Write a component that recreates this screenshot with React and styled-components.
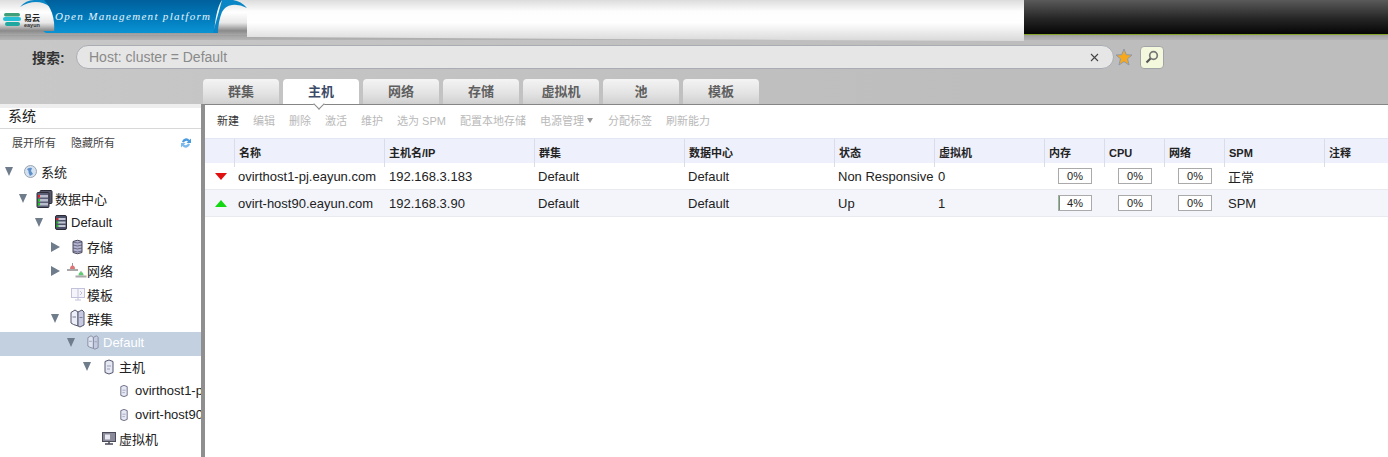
import React from "react";
import styled, { createGlobalStyle } from "styled-components";

const cjk = `"Liberation Sans", "Noto Sans CJK SC", sans-serif`;

const GlobalStyle = createGlobalStyle`
  html, body { margin: 0; padding: 0; background: #fff; }
  body { font-family: ${cjk}; overflow: hidden; }
`;

const Page = styled.div`
  width: 1388px;
  height: 457px;
  overflow: hidden;
  display: flex;
  flex-direction: column;
  background: #bdbdbd;
`;

const Header = styled.div`
  display: flex;
  align-items: flex-start;
  height: 40px;
  flex: none;
  background: linear-gradient(#8c8c8c 34px, #a5a5a5 36px, #b4b4b4 40px);
`;

const LogoBox = styled.svg`
  width: 247px;
  height: 35px;
  flex: none;
  display: block;
`;

const WhiteBand = styled.div`
  width: 777px;
  height: 41px;
  flex: none;
  background: linear-gradient(#dcdcdc, #fdfdfd 28%, #fff 55%, #d9d9d9);
  position: relative;
  z-index: 1;
  clip-path: polygon(0 0, 100% 0, 100% 41px, 70% 40px, 45% 39px, 0 37px);
`;

const DarkBand = styled.div`
  flex: 1;
  height: 34px;
  background: linear-gradient(#5a5a5a, #262626 55%, #050505);
  border-bottom: 1px solid #86a52c;
`;

const SearchArea = styled.div`
  height: 64px;
  flex: none;
  display: flex;
  flex-direction: column;
  background: linear-gradient(90deg, #c8c8c8, #c4c4c4 300px, #bdbdbd 1000px);
`;

const SearchRow = styled.div`
  display: flex;
  align-items: center;
  height: 24px;
  margin-top: 5px;
  padding-left: 32px;
`;

const SearchLabel = styled.div`
  width: 44px;
  font-size: 14px;
  font-weight: 700;
  color: #333;
`;

const SearchBox = styled.div`
  width: 1038px;
  height: 24px;
  box-sizing: border-box;
  display: flex;
  align-items: center;
  justify-content: space-between;
  padding: 0 12px;
  background: #e6e6e6;
  border: 1px solid #a9adb3;
  border-radius: 12px;
  font-size: 14px;
  color: #8a8a8a;
`;

const Clear = styled.svg`
  width: 9px;
  height: 9px;
  margin-right: 2px;
`;

const Star = styled.svg`
  width: 18px;
  height: 18px;
  margin-left: 1px;
`;

const SearchBtn = styled.div`
  width: 24px;
  height: 23px;
  box-sizing: border-box;
  margin-left: 7px;
  display: flex;
  align-items: center;
  justify-content: center;
  background: #f4f9dd;
  border: 1px solid #a2a5a8;
  border-radius: 4px;
`;

const Tabs = styled.div`
  display: flex;
  gap: 4px;
  margin-top: 10px;
  padding-left: 203px;
  height: 25px;
`;

const Tab = styled.div`
  width: 76px;
  height: 25px;
  box-sizing: border-box;
  padding-bottom: 3px;
  display: flex;
  align-items: center;
  justify-content: center;
  position: relative;
  border-radius: 4px 4px 0 0;
  font-size: 13px;
  font-weight: 700;
  color: ${(p) => (p.$active ? "#3b4a66" : "#5f5f5f")};
  background: ${(p) => (p.$active ? "#fff" : "linear-gradient(#f4f4f4, #e2e2e2 60%, #d0d0d0)")};
`;

const Notch = styled.span`
  position: absolute;
  left: 32px;
  bottom: -4px;
  width: 7px;
  height: 7px;
  background: #fff;
  transform: rotate(45deg);
  border-right: 1px solid #8a8a8a;
  border-bottom: 1px solid #8a8a8a;
  z-index: 2;
`;

const Body = styled.div`
  flex: 1;
  min-height: 0;
  display: flex;
  border-top: 1px solid transparent;
`;

const Sidebar = styled.div`
  width: 201px;
  flex: none;
  overflow: hidden;
  background: #fff;
  margin-top: -1px;
`;

const SideTitle = styled.div`
  height: 20px;
  margin-top: 4px;
  padding-left: 8px;
  line-height: 17px;
  font-size: 14px;
  color: #222;
  border-bottom: 1px solid #d8d8d8;
  box-shadow: 0 -4px 0 #eeeeee;
`;

const SideActions = styled.div`
  display: flex;
  align-items: center;
  gap: 15px;
  height: 28px;
  box-sizing: border-box;
  padding: 0 0 2px 12px;
  font-size: 11px;
  color: #444;
`;

const Refresh = styled.svg`
  width: 12px;
  height: 12px;
  margin: 2px 0 0 50px;
`;

const Tree = styled.div`
  margin-top: 4px;
`;

const TreeRow = styled.div`
  display: flex;
  align-items: center;
  height: 24px;
  box-sizing: border-box;
  margin-top: ${(p) => p.$gap || 0}px;
  padding-left: ${(p) => 3 + p.$level * 16}px;
  padding-bottom: 3px;
  white-space: nowrap;
  font-size: 13px;
  color: ${(p) => (p.$selected ? "#fff" : "#222")};
  background: ${(p) => (p.$selected ? "#c2d0e0" : "transparent")};
`;

const ArrowSlot = styled.span`
  width: 20px;
  flex: none;
  display: flex;
  align-items: center;
`;

const Arrow = styled.span`
  width: 0;
  height: 0;
  margin-left: ${(p) => (p.$root ? 2 : 0)}px;
  ${(p) =>
    p.$open
      ? "border-left: 4.5px solid transparent; border-right: 4.5px solid transparent; border-top: 9px solid #6f7c8c;"
      : "border-top: 5px solid transparent; border-bottom: 5px solid transparent; border-left: 9px solid #6f7c8c;"}
`;

const IconSlot = styled.span`
  width: ${(p) => p.$width || 16}px;
  flex: none;
  display: flex;
  align-items: center;
  & > svg { margin-left: ${(p) => p.$shift || 0}px; }
`;

const Main = styled.div`
  flex: 1;
  min-width: 0;
  background: #fff;
  border-left: 4px solid #8f8f8f;
  border-top: 1px solid #858585;
  margin-top: -1px;
`;

const Toolbar = styled.div`
  display: flex;
  align-items: center;
  gap: 14px;
  height: 33px;
  box-sizing: border-box;
  padding: 0 0 3px 12px;
  font-size: 11px;
  white-space: nowrap;
`;

const ToolBtn = styled.span`
  display: inline-flex;
  align-items: center;
  gap: 3px;
  color: ${(p) => (p.$enabled ? "#333" : "#b9b9b9")};
`;

const Caret = styled.span`
  width: 0;
  height: 0;
  margin-right: 1px;
  border-left: 3.5px solid transparent;
  border-right: 3.5px solid transparent;
  border-top: 5px solid #9a9a9a;
`;

const columns = "30px 150px 150px 150px 150px 100px 110px 60px 60px 60px 100px 63px";

const HeadRow = styled.div`
  display: grid;
  grid-template-columns: ${columns};
  height: 24px;
  background: #eef1fc;
  border-top: 1px solid #e3e7f3;
`;

const HeadCell = styled.div`
  box-sizing: border-box;
  padding-left: 4px;
  line-height: 28px;
  font-size: 11px;
  font-weight: 700;
  color: #222;
  border-right: 1px solid #d9dcea;
  white-space: nowrap;
  &:first-child { padding: 0; }
  &:last-child { border-right: 0; }
`;

const DataRow = styled.div`
  display: grid;
  grid-template-columns: ${columns};
  height: 26px;
  align-items: center;
  background: ${(p) => (p.$alt ? "#f3f5fb" : "#fff")};
  border-bottom: 1px solid #e8eaef;
  font-size: 13px;
  color: #222;
`;

const Cell = styled.div`
  padding-left: ${(p) => p.$pad || 3}px;
  white-space: nowrap;
`;

const StatusCell = styled.div`
  display: flex;
  justify-content: center;
  padding-left: 1px;
`;

const Triangle = styled.span`
  width: 0;
  height: 0;
  border-left: 6.5px solid transparent;
  border-right: 6.5px solid transparent;
  ${(p) => (p.$up ? "border-bottom: 7px solid #12d812;" : "border-top: 7px solid #e01010;")}
`;

const BarCell = styled.div`
  display: flex;
  justify-content: center;
`;

const Bar = styled.div`
  width: 34px;
  height: 16px;
  box-sizing: border-box;
  position: relative;
  display: flex;
  align-items: center;
  justify-content: center;
  border: 1px solid #aaa;
  font-size: 11px;
  color: #222;
  background: #fff;
`;

const BarFill = styled.span`
  position: absolute;
  left: 0;
  top: 0;
  bottom: 0;
  background: #6f9a6f;
`;

function Logo() {
  return (
    <LogoBox viewBox="0 0 247 35">
      <defs>
        <linearGradient id="rib" x1="0" y1="0" x2="0" y2="1">
          <stop offset="0" stopColor="#00609c" />
          <stop offset="0.5" stopColor="#0078b8" />
          <stop offset="1" stopColor="#0a93d4" />
        </linearGradient>
        <linearGradient id="paper" x1="0" y1="0" x2="0" y2="1">
          <stop offset="0" stopColor="#dedede" />
          <stop offset="0.35" stopColor="#ffffff" />
          <stop offset="0.65" stopColor="#e8e8e8" />
          <stop offset="0.88" stopColor="#8a8a8a" />
          <stop offset="1" stopColor="#a8a8a8" />
        </linearGradient>
      </defs>
      <rect width="247" height="35" fill="url(#paper)" />
      <path d="M20 7 Q26 0 34 0 H46 L50 7 Q44 2 36 2 Q28 2 20 7 Z" fill="#0a86c6" />
      <path d="M44 0 H222 Q216 8 214 33 H54 Q55 22 52 13 Q49 5 44 0 Z" fill="url(#rib)" />
      <path d="M43 31 H55 V33 H46 Z" fill="#0a93d4" />
      <path d="M222 0 H233 Q241 1 247 8 Q239 4 232 5 Q225 6 222 12 Q218 22 218 33 H213 Z" fill="#0a86c6" />
      <rect x="4" y="13" width="16" height="3.500" rx="1.700" fill="#3f9f7a" />
      <rect x="3" y="17" width="18" height="4" rx="2" fill="#26bfd6" />
      <rect x="5" y="22" width="15" height="4" rx="2" fill="#1fa8a0" />
      <text x="24" y="21" fontSize="8" fontWeight="700" fill="#222" fontFamily="Noto Sans CJK SC">易云</text>
      <text x="24" y="26.500" fontSize="5.500" fontWeight="700" fill="#333" fontFamily="Liberation Sans">eayun</text>
      <text x="55" y="19.500" fontSize="11" fontStyle="italic" fill="#e6f4fb" letterSpacing="1.320" fontFamily="Liberation Serif">Open Management platform</text>
    </LogoBox>
  );
}

const Globe = () => (
  <svg width="13" height="13" viewBox="0 0 13 13">
    <circle cx="6.500" cy="6.500" r="6" fill="#d5e2f0" stroke="#9aa3ae" />
    <path d="M3 4 Q6 2 8 3 L7 6 L9 9 L6 11 Q4 8 4.500 6 Z" fill="#5f8fc8" />
  </svg>
);

const DcStack = () => (
  <svg width="17" height="18" viewBox="0 0 17 18">
    <rect x="4" y="0.500" width="12" height="13" rx="1" fill="#55586a" stroke="#2c2c38" />
    <rect x="1" y="2.500" width="12" height="15" rx="1" fill="#5c6078" stroke="#2c2c38" />
    <rect x="3" y="5" width="9" height="2.500" fill="#b8bccc" />
    <rect x="3" y="9" width="9" height="2.500" fill="#b8bccc" />
    <rect x="3" y="13" width="9" height="2.500" fill="#b8bccc" />
    <rect x="2" y="5" width="2" height="2.500" fill="#e02020" />
    <rect x="2" y="9" width="2" height="2.500" fill="#22c422" />
    <rect x="2" y="13" width="2" height="2.500" fill="#22c422" />
  </svg>
);

const DcSingle = () => (
  <svg width="12" height="15" viewBox="0 0 12 15">
    <rect x="0.500" y="0.500" width="11" height="14" rx="1.500" fill="#4c5068" stroke="#2c2c38" />
    <rect x="3" y="3" width="7.500" height="2" fill="#c4c8d6" />
    <rect x="3" y="6.500" width="7.500" height="2" fill="#c4c8d6" />
    <rect x="3" y="10" width="7.500" height="2" fill="#c4c8d6" />
    <rect x="1.500" y="3" width="2" height="2" fill="#e02020" />
    <rect x="1.500" y="6.500" width="2" height="2" fill="#22c422" />
    <rect x="1.500" y="10" width="2" height="2" fill="#22c422" />
  </svg>
);

const Storage = () => (
  <svg width="11" height="16" viewBox="0 0 11 16">
    <path d="M1 2.500 Q5.500 0 10 2.500 V13.500 Q5.500 16 1 13.500 Z" fill="#b4b4d2" stroke="#4a4a5e" />
    <path d="M1 6 Q5.500 8 10 6 M1 9 Q5.500 11 10 9 M1 12 Q5.500 14 10 12 M1 3 Q5.500 5 10 3" fill="none" stroke="#4a4a5e" strokeWidth="0.700" />
  </svg>
);

const Network = () => (
  <svg width="20" height="15" viewBox="0 0 20 15">
    <path d="M5.500 0 V3 M14 8 V9" stroke="#999" fill="none" />
    <path d="M3 6 Q3 2.500 5.500 2.500 Q8 2.500 8 6 Z" fill="#dc7676" />
    <rect x="0" y="6" width="11" height="2" fill="#a8a8a8" />
    <path d="M11.500 12.500 Q11.500 9 14 9 Q16.500 9 16.500 12.500 Z" fill="#62c872" />
    <rect x="8.500" y="12.500" width="11" height="2" fill="#a8a8a8" />
  </svg>
);

const Template = () => (
  <svg width="14" height="13" viewBox="0 0 14 13">
    <rect x="0.500" y="0.500" width="13" height="9" fill="#f4f4fa" stroke="#c2c2da" />
    <path d="M7 1 V9 M9 3 L11 5 L9 7" stroke="#c2c2da" fill="none" />
    <path d="M4 12 H10 M7 10 V12" stroke="#c2c2da" />
  </svg>
);

const Cluster = ({ faded }) => (
  <svg width={faded ? 12 : 15} height={faded ? 15 : 19} viewBox="0 0 15 19" opacity={faded ? 0.65 : 1}>
    <path d="M1 3.500 L5 1 L8 3 V17 L3.500 15.500 L1 14 Z" fill="#eceef8" stroke="#55566e" />
    <path d="M8 3 L12 1 L14 3 V16 L10 18 L8 17 Z" fill="#c6c9e0" stroke="#55566e" />
    <path d="M2.500 8 H6 M9.500 8.500 H12.500" stroke="#7c7e98" />
  </svg>
);

const HostIcon = ({ small }) => (
  <svg width={small ? 8 : 10} height={small ? 14 : 16} viewBox="0 0 10 16">
    <path d="M1 2.500 Q5 -0.500 9 2.500 V13.500 Q5 16.500 1 13.500 Z" fill="#e6e8f4" stroke="#54566e" />
    <path d="M3 7 H7 M3 10 H6" stroke="#9a9cb8" />
  </svg>
);

const VmIcon = () => (
  <svg width="14" height="13" viewBox="0 0 14 13">
    <rect x="0.500" y="0.500" width="13" height="9" fill="#8a8a9a" stroke="#4a4a58" />
    <rect x="3" y="2.500" width="5" height="5" fill="#e8e8f0" />
    <path d="M3 12 H11 M7 10 V12" stroke="#4a4a58" strokeWidth="1.500" />
  </svg>
);

const treeItems = [
  { level: 0, open: true, icon: <Globe />, label: "系统", slot: 18, shift: 1 },
  { level: 1, open: true, icon: <DcStack />, label: "数据中心", shift: -3, gap: 3 },
  { level: 2, open: true, icon: <DcSingle />, label: "Default" },
  { level: 3, open: false, icon: <Storage />, label: "存储", shift: 1 },
  { level: 3, open: false, icon: <Network />, label: "网络", shift: -4 },
  { level: 3, icon: <Template />, label: "模板" },
  { level: 3, open: true, icon: <Cluster />, label: "群集", shift: -1 },
  { level: 4, open: true, icon: <Cluster faded />, label: "Default", selected: true },
  { level: 5, open: true, icon: <HostIcon />, label: "主机", shift: 1 },
  { level: 6, icon: <HostIcon small />, label: "ovirthost1-pj.eayun.com", shift: 1 },
  { level: 6, icon: <HostIcon small />, label: "ovirt-host90.eayun.com", shift: 1 },
  { level: 5, icon: <VmIcon />, label: "虚拟机", shift: -1 },
];

const tools = [
  ["新建", true],
  ["编辑"],
  ["删除"],
  ["激活"],
  ["维护"],
  ["选为 SPM"],
  ["配置本地存储"],
  ["电源管理", false, true],
  ["分配标签"],
  ["刷新能力"],
];

const heads = ["", "名称", "主机名/IP", "群集", "数据中心", "状态", "虚拟机", "内存", "CPU", "网络", "SPM", "注释"];

const hosts = [
  { up: false, name: "ovirthost1-pj.eayun.com", ip: "192.168.3.183", status: "Non Responsive", vms: 0, mem: 0, spm: "正常" },
  { up: true, name: "ovirt-host90.eayun.com", ip: "192.168.3.90", status: "Up", vms: 1, mem: 4, spm: "SPM" },
];

function UsageBar({ value }) {
  return (
    <BarCell>
      <Bar>
        <BarFill style={{ width: `${value / 2}%` }} />
        {value}%
      </Bar>
    </BarCell>
  );
}

export default function App() {
  return (
    <Page>
      <GlobalStyle />
      <Header>
        <Logo />
        <WhiteBand />
        <DarkBand />
      </Header>
      <SearchArea>
        <SearchRow>
          <SearchLabel>搜索:</SearchLabel>
          <SearchBox>
            Host: cluster = Default
            <Clear viewBox="0 0 9 9">
              <path d="M1 1 L8 8 M8 1 L1 8" stroke="#444" strokeWidth="1.100" />
            </Clear>
          </SearchBox>
          <Star viewBox="0 0 18 18">
            <path d="M9 1 L11.300 6.700 L17 7 L12.500 10.800 L14 17 L9 13.600 L4 17 L5.500 10.800 L1 7 L6.700 6.700 Z" fill="#f7a81b" stroke="#8a9ab0" />
          </Star>
          <SearchBtn>
            <svg width="14" height="14" viewBox="0 0 14 14">
              <circle cx="8.500" cy="5.500" r="3.800" fill="none" stroke="#777" strokeWidth="1.700" />
              <path d="M5.500 8.500 L1.500 12.500" stroke="#555" strokeWidth="2.200" />
            </svg>
          </SearchBtn>
        </SearchRow>
        <Tabs>
          {["群集", "主机", "网络", "存储", "虚拟机", "池", "模板"].map((t) => (
            <Tab key={t} $active={t === "主机"}>
              {t}
              {t === "主机" && <Notch />}
            </Tab>
          ))}
        </Tabs>
      </SearchArea>
      <Body>
        <Sidebar>
          <SideTitle>系统</SideTitle>
          <SideActions>
            <span>展开所有</span>
            <span>隐藏所有</span>
            <Refresh viewBox="0 0 12 12">
              <path d="M2 5 A4.200 4.200 0 0 1 9.500 3 L11 1.500 V6 H6.500 L8 4.500 A2.500 2.500 0 0 0 4 5.500 Z" fill="#4a9be0" />
              <path d="M10 7 A4.200 4.200 0 0 1 2.500 9 L1 10.500 V6 H5.500 L4 7.500 A2.500 2.500 0 0 0 8 6.500 Z" fill="#7cb9ec" />
            </Refresh>
          </SideActions>
          <Tree>
            {treeItems.map((item) => (
              <TreeRow key={item.level + item.label} $level={item.level} $selected={item.selected} $gap={item.gap}>
                <ArrowSlot>{item.open !== undefined && <Arrow $open={item.open} $root={item.level === 0} />}</ArrowSlot>
                <IconSlot $width={item.slot} $shift={item.shift}>
                  {item.icon}
                </IconSlot>
                {item.label}
              </TreeRow>
            ))}
          </Tree>
        </Sidebar>
        <Main>
          <Toolbar>
            {tools.map(([label, enabled, caret]) => (
              <ToolBtn key={label} $enabled={enabled}>
                {label}
                {caret && <Caret />}
              </ToolBtn>
            ))}
          </Toolbar>
          <HeadRow>
            {heads.map((h, i) => (
              <HeadCell key={i}>{h}</HeadCell>
            ))}
          </HeadRow>
          {hosts.map((h, i) => (
            <DataRow key={h.name} $alt={i === 1}>
              <StatusCell>
                <Triangle $up={h.up} />
              </StatusCell>
              <Cell>{h.name}</Cell>
              <Cell $pad={4}>{h.ip}</Cell>
              <Cell>Default</Cell>
              <Cell>Default</Cell>
              <Cell>{h.status}</Cell>
              <Cell>{h.vms}</Cell>
              <UsageBar value={h.mem} />
              <UsageBar value={0} />
              <UsageBar value={0} />
              <Cell>{h.spm}</Cell>
              <Cell />
            </DataRow>
          ))}
        </Main>
      </Body>
    </Page>
  );
}
